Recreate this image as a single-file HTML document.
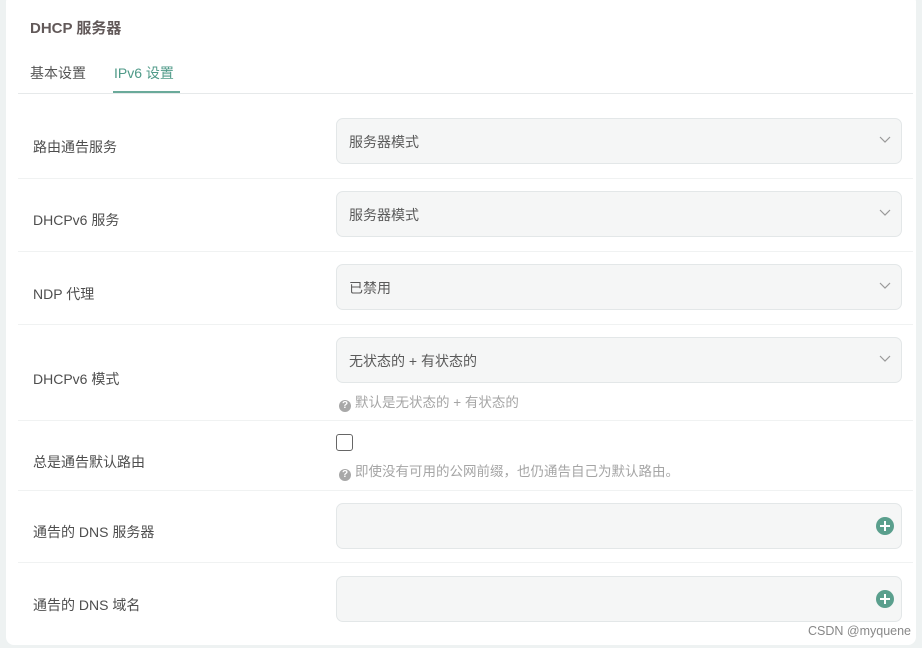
<!DOCTYPE html>
<html><head><meta charset="utf-8"><style>
*{box-sizing:border-box;margin:0;padding:0}
body{width:922px;height:648px;background:#eef2f2;font-family:"Liberation Sans","Noto Sans CJK SC",sans-serif;position:relative;overflow:hidden}
.card{position:absolute;left:6px;top:-6px;width:910px;height:651px;background:#fff;border-radius:8px}
.abs{position:absolute}
.title{left:30px;top:17px;font-size:15px;font-weight:bold;color:#625959}
.tab{top:63px;font-size:14px;color:#555}
.hr{left:18px;width:895px;height:1px;background:#f0f2f2}
.lbl{left:33px;font-size:14px;color:#4e4e4e}
.box{left:336px;width:566px;height:46px;background:#f5f6f6;border:1px solid #e3e7e8;border-radius:7px;font-size:14px;color:#5a5a5a;padding:13px 0 0 12px}
.chev{position:absolute;right:10px;top:17px}
.help{left:339px;font-size:13.5px;color:#a5a5a5}
.q{display:inline-block;width:12px;height:12px;border-radius:50%;background:#a8a8a8;color:#fff;font-size:10px;font-weight:bold;line-height:12px;text-align:center;vertical-align:-1px;margin-right:4px}
.plus{position:absolute;right:7px;top:13px;width:18px;height:18px;border-radius:50%;background:#5a9f8d}
.plus:before{content:"";position:absolute;left:4px;top:8px;width:10px;height:2px;background:#fff}
.plus:after{content:"";position:absolute;left:8px;top:4px;width:2px;height:10px;background:#fff}
</style></head><body>
<div class="card"></div>
<div class="abs title">DHCP 服务器</div>
<div class="abs tab" style="left:30px">基本设置</div>
<div class="abs tab" style="left:114px;color:#4f9a88">IPv6 设置</div>
<div class="abs" style="left:113px;top:91px;width:67px;height:2px;background:#6aaa9a"></div>
<div class="abs hr" style="top:93px;background:#e6e9ea"></div>

<div class="abs lbl" style="top:137px">路由通告服务</div>
<div class="abs box" style="top:118px">服务器模式<svg class="chev" width="12" height="8"><path d="M1 1l5 5 5-5" fill="none" stroke="#999" stroke-width="1.2"/></svg></div>
<div class="abs hr" style="top:178px"></div>

<div class="abs lbl" style="top:210px">DHCPv6 服务</div>
<div class="abs box" style="top:191px">服务器模式<svg class="chev" width="12" height="8"><path d="M1 1l5 5 5-5" fill="none" stroke="#999" stroke-width="1.2"/></svg></div>
<div class="abs hr" style="top:251px"></div>

<div class="abs lbl" style="top:284px">NDP 代理</div>
<div class="abs box" style="top:264px">已禁用<svg class="chev" width="12" height="8"><path d="M1 1l5 5 5-5" fill="none" stroke="#999" stroke-width="1.2"/></svg></div>
<div class="abs hr" style="top:324px"></div>

<div class="abs lbl" style="top:369px">DHCPv6 模式</div>
<div class="abs box" style="top:337px">无状态的 + 有状态的<svg class="chev" width="12" height="8"><path d="M1 1l5 5 5-5" fill="none" stroke="#999" stroke-width="1.2"/></svg></div>
<div class="abs help" style="top:391px"><span class="q">?</span>默认是无状态的 + 有状态的</div>
<div class="abs hr" style="top:420px"></div>

<div class="abs lbl" style="top:452px">总是通告默认路由</div>
<div class="abs" style="left:336px;top:434px;width:17px;height:17px;border:1.5px solid #666;border-radius:3px"></div>
<div class="abs help" style="top:460px"><span class="q">?</span>即使没有可用的公网前缀，也仍通告自己为默认路由。</div>
<div class="abs hr" style="top:490px"></div>

<div class="abs lbl" style="top:522px">通告的 DNS 服务器</div>
<div class="abs box" style="top:503px"><span class="plus"></span></div>
<div class="abs hr" style="top:562px"></div>

<div class="abs lbl" style="top:595px">通告的 DNS 域名</div>
<div class="abs box" style="top:576px"><span class="plus"></span></div>
<div class="abs" style="left:808px;top:624px;font-size:12.5px;color:#888">CSDN @myquene</div>
</body></html>
